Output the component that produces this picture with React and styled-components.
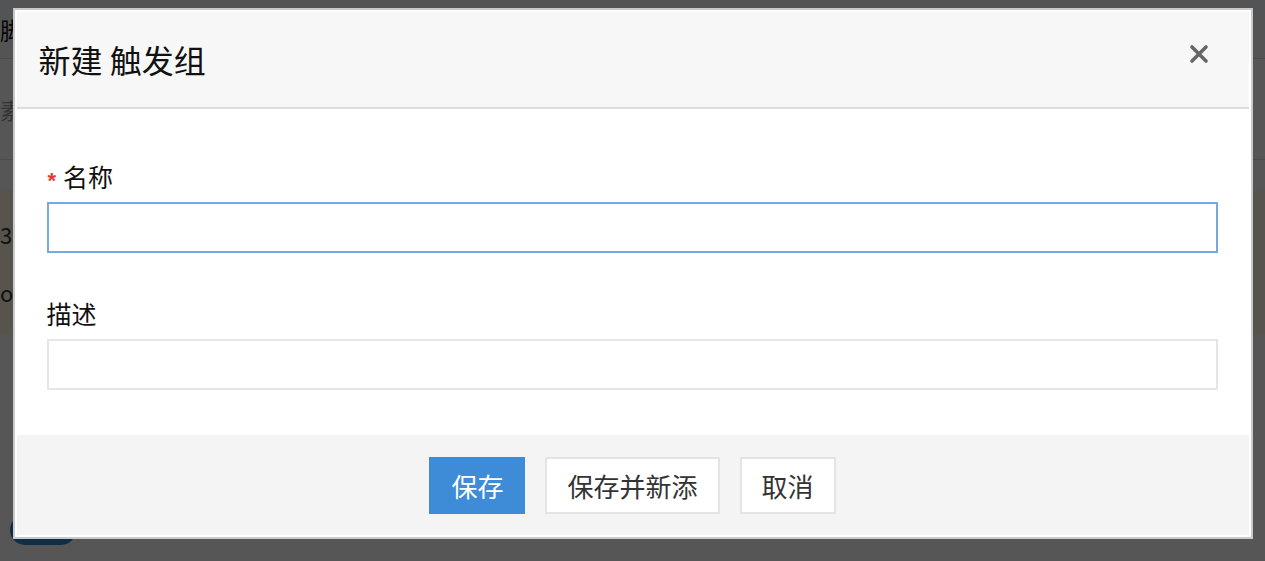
import React from "react";
import styled, { createGlobalStyle } from "styled-components";

const GlobalStyle = createGlobalStyle`
  html, body {
    margin: 0;
    padding: 0;
    width: 100%;
    height: 100%;
    overflow: hidden;
    background: #fff;
    font-family: "Noto Sans CJK SC", "Noto Sans", "Liberation Sans", sans-serif;
  }
`;

/* underlying page (dimmed by the overlay) */
const Page = styled.div`
  height: 561px;
  display: flex;
  flex-direction: column;
  background: #fbfbfb;
`;

const PageTop = styled.div`
  height: 58px;
  border-bottom: 1px solid #ddd;
  display: flex;
  align-items: center;
  font-size: 24px;
  color: #111;
  background: #f3f6f8;
`;

const SearchRow = styled.div`
  height: 100px;
  display: flex;
  align-items: center;
  font-size: 22px;
  color: #999;
  border-bottom: 1px solid #ddd;
`;

const Notice = styled.div`
  margin-top: 30px;
  height: 145px;
  background: #fff7e0;
  display: flex;
  flex-direction: column;
  justify-content: center;
  gap: 26px;
  font-size: 22px;
  color: #333;
`;

const PageBottom = styled.div`
  flex: 1;
  display: flex;
  align-items: flex-end;
  padding: 0 0 16px 10px;
`;

const Pill = styled.div`
  width: 66px;
  height: 30px;
  border-radius: 15px;
  background: #2f80d0;
`;

const Overlay = styled.div`
  position: fixed;
  inset: 0;
  background: rgba(0, 0, 0, 0.66);
  display: flex;
  justify-content: center;
  align-items: flex-start;
  padding-top: 8px;
`;

const Modal = styled.div`
  width: 1240px;
  box-sizing: border-box;
  border: 2px solid #c9c9c9;
  padding: 2px;
  background: #fff;
  display: flex;
  flex-direction: column;
`;

const Header = styled.div`
  height: 95px;
  background: #f7f7f7;
  border-bottom: 2px solid #dedede;
  display: flex;
  align-items: center;
  justify-content: space-between;
  padding: 0 38px 0 22px;
`;

const Title = styled.h2`
  margin: -2px 0 0;
  font-size: 32px;
  font-weight: 400;
  color: #111;
`;

const CloseButton = styled.button`
  border: none;
  background: transparent;
  padding: 0;
  width: 24px;
  height: 24px;
  display: flex;
  align-items: center;
  justify-content: center;
  margin-top: -12px;
  cursor: pointer;
`;

const Body = styled.div`
  padding: 50px 31px 45px 30px;
  display: flex;
  flex-direction: column;
  gap: 43px;
`;

const Field = styled.div`
  display: flex;
  flex-direction: column;
  gap: 9px;
`;

const Label = styled.label`
  font-size: 25px;
  line-height: 34px;
  color: #111;
  display: flex;
  align-items: center;
  gap: 7px;
  padding-left: ${(p) => (p.$required ? "1px" : "0")};
`;

const Star = styled.span`
  color: #e8382f;
  font-size: 22px;
  font-family: "Liberation Sans", sans-serif;
  font-weight: 700;
  line-height: 1;
  padding-top: 9px;
`;

const Input = styled.input`
  height: 51px;
  box-sizing: border-box;
  border: 2px solid ${(p) => (p.$focused ? "#76a8e2" : "#e6e6e6")};
  outline: none;
  font-size: 22px;
  padding: 0 12px;
  font-family: inherit;
`;

const Footer = styled.div`
  height: 100px;
  background: #f4f4f4;
  display: flex;
  align-items: center;
  justify-content: center;
  gap: 20px;
`;

const Button = styled.button`
  height: 57px;
  box-sizing: border-box;
  padding: 0 20px;
  font-size: 26px;
  font-family: inherit;
  border: 2px solid ${(p) => (p.$primary ? "#3e8bd8" : "#e4e4e4")};
  background: ${(p) => (p.$primary ? "#3e8bd8" : "#fff")};
  color: ${(p) => (p.$primary ? "#fff" : "#333")};
  cursor: pointer;
`;

const CloseIcon = () => (
  <svg width="20" height="20" viewBox="0 0 20 20">
    <path
      d="M3 3 L17 17 M17 3 L3 17"
      stroke="#666"
      strokeWidth="3.6"
      strokeLinecap="round"
    />
  </svg>
);

export default function App() {
  return (
    <>
      <GlobalStyle />
      <Page>
        <PageTop>
          <span>脚本执行</span>
        </PageTop>
        <SearchRow>素</SearchRow>
        <Notice>
          <span>3)</span>
          <span>o</span>
        </Notice>
        <PageBottom>
          <Pill />
        </PageBottom>
      </Page>
      <Overlay>
        <Modal>
          <Header>
            <Title>新建 触发组</Title>
            <CloseButton aria-label="close">
              <CloseIcon />
            </CloseButton>
          </Header>
          <Body>
            <Field>
              <Label $required>
                <Star>*</Star>名称
              </Label>
              <Input $focused />
            </Field>
            <Field>
              <Label>描述</Label>
              <Input />
            </Field>
          </Body>
          <Footer>
            <Button $primary>保存</Button>
            <Button>保存并新添</Button>
            <Button>取消</Button>
          </Footer>
        </Modal>
      </Overlay>
    </>
  );
}
